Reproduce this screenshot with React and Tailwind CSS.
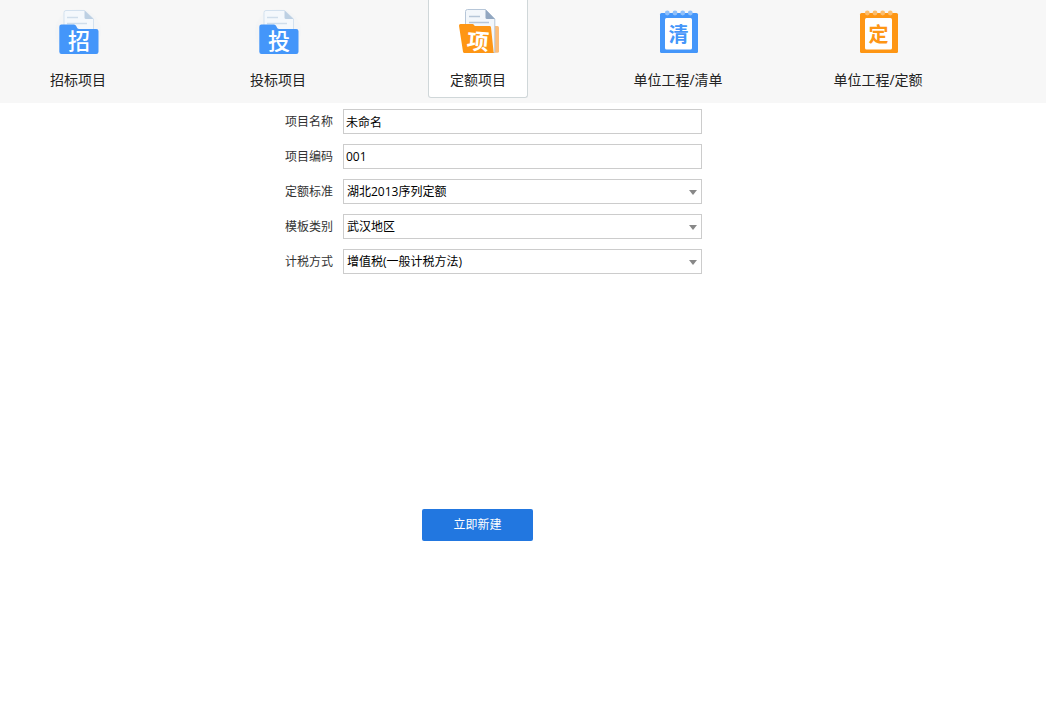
import { useState } from 'react';

const glyphFont = '"Noto Sans CJK SC", sans-serif';

function FolderIcon({ glyph }) {
  return (
    <svg viewBox="0 0 48 48" className="size-12" aria-hidden="true">
      <circle cx="24" cy="24" r="23" fill="#f4f5f6" />
      <path d="M12 2.5h18.5l9 8.5v12H10V4.5a2 2 0 0 1 2-2z" fill="#f4f8fc" stroke="#d3e1ef" />
      <path d="M30.5 2.5l9 8.5H32a1.5 1.5 0 0 1-1.5-1.5z" fill="#bdd0e3" />
      <path d="M13 9.5h11M13 15.5h20" stroke="#cfddeb" strokeWidth="1.5" />
      <path
        d="M7.5 16.5H20q1.5 0 2.2 1.5l1 2q.6 1 2 1h17.1a2.200 2.200 0 0 1 2.200 2.200v20.600a2.200 2.200 0 0 1-2.200 2.200H7.5a2.200 2.200 0 0 1-2.200-2.200V18.700a2.200 2.200 0 0 1 2.200-2.200z"
        fill="#4496fa"
      />
      <text x="25" y="41" textAnchor="middle" fontSize="22" fontWeight="500" fontFamily={glyphFont} fill="#fff">
        {glyph}
      </text>
    </svg>
  );
}

function OpenFolderIcon({ glyph }) {
  return (
    <svg viewBox="0 0 48 48" className="size-12" aria-hidden="true">
      <path d="M38 18h5.5a1.5 1.5 0 0 1 1.5 1.5v23.7a1.5 1.5 0 0 1-1.5 1.5H38z" fill="#fdbd78" />
      <path d="M13.5 1.5h18l9.3 9.5v33.5H11.500v-41a2 2 0 0 1 2-2z" fill="#f3f7fb" stroke="#b6c6d8" />
      <path d="M31.5 1.5l9.3 9.5H33a1.5 1.5 0 0 1-1.5-1.5z" fill="#92a7c1" />
      <path d="M15 8.5h11M15 14.5h20" stroke="#b6c6d8" strokeWidth="1.5" />
      <path
        d="M6.5 16h12q1 0 1.5.9l.8 1.1H35.5q1.300 0 1.500 1.300L39.700 45H10.500q-1.300 0-1.500-1.300L5 17.700Q4.900 16 6.500 16z"
        fill="#fe9614"
      />
      <text
        x="24"
        y="41.5"
        textAnchor="middle"
        fontSize="22"
        fontWeight="700"
        fontFamily={glyphFont}
        fill="#fff"
        transform="rotate(5 24 33)"
      >
        {glyph}
      </text>
    </svg>
  );
}

function NotepadIcon({ glyph, color, ring }) {
  return (
    <svg viewBox="0 0 48 48" className="size-12" aria-hidden="true">
      <rect x="6" y="5" width="38" height="40" rx="1.5" fill={color} />
      <rect x="11" y="10" width="27" height="31.5" rx="1.5" fill="#fff" />
      {[13.3, 21, 28.7, 36.3].map((x) => (
        <circle key={x} cx={x} cy="5" r="2.4" fill={ring} />
      ))}
      <text x="24.5" y="33.5" textAnchor="middle" fontSize="20" fontWeight="700" fontFamily={glyphFont} fill={color}>
        {glyph}
      </text>
    </svg>
  );
}

const tabs = [
  { id: 'tender', label: '招标项目', icon: <FolderIcon glyph="招" /> },
  { id: 'bid', label: '投标项目', icon: <FolderIcon glyph="投" /> },
  { id: 'quota', label: '定额项目', icon: <OpenFolderIcon glyph="项" /> },
  { id: 'unit-list', label: '单位工程/清单', icon: <NotepadIcon glyph="清" color="#4496fa" ring="#8fc0fb" /> },
  { id: 'unit-quota', label: '单位工程/定额', icon: <NotepadIcon glyph="定" color="#fe9614" ring="#fcbd6c" /> },
];

const fields = [
  { id: 'name', label: '项目名称', value: '未命名' },
  { id: 'code', label: '项目编码', value: '001' },
  { id: 'standard', label: '定额标准', options: ['湖北2013序列定额'] },
  { id: 'template', label: '模板类别', options: ['武汉地区'] },
  { id: 'tax', label: '计税方式', options: ['增值税(一般计税方法)'] },
];

const control = 'h-[25px] w-full border border-[#cccccc] bg-white text-xs text-black outline-none focus:border-[#2277e0]';

function Field({ field }) {
  return (
    <div className="flex items-center gap-[10px]">
      <label htmlFor={field.id} className="w-20 shrink-0 text-right text-xs text-[#333333]">
        {field.label}
      </label>
      <div className="relative min-w-0 flex-1">
        {field.options ? (
          <>
            <select id={field.id} className={`${control} block appearance-none pr-6 pl-[3px]`}>
              {field.options.map((o) => (
                <option key={o}>{o}</option>
              ))}
            </select>
            <svg
              viewBox="0 0 8 5"
              className="pointer-events-none absolute top-[11px] right-[5px] h-[5px] w-2"
              aria-hidden="true"
            >
              <path d="M0 0h8L4 5z" fill="#888" />
            </svg>
          </>
        ) : (
          <input id={field.id} type="text" defaultValue={field.value} className={`${control} block px-[2px]`} />
        )}
      </div>
    </div>
  );
}

export default function App() {
  const [active, setActive] = useState('quota');

  return (
    <div className="min-h-screen bg-white font-['Open_Sans','Noto_Sans_CJK_SC',sans-serif]">
      <nav className="flex gap-[100px] bg-[#f7f7f7] px-7 pb-[5px]">
        {tabs.map((tab) => (
          <button
            key={tab.id}
            type="button"
            onClick={() => setActive(tab.id)}
            className={`flex w-[100px] shrink-0 flex-col items-center gap-[14px] rounded-b-[3px] border border-t-0 pt-2 pb-[7px] text-sm leading-5 whitespace-nowrap text-[#222222] ${
              active === tab.id ? 'border-[#d0d7d9] bg-white' : 'border-transparent'
            }`}
          >
            {tab.icon}
            {tab.label}
          </button>
        ))}
      </nav>

      <main className="max-w-[955px] pt-[6px]">
        <form className="flex flex-col items-center" onSubmit={(e) => e.preventDefault()}>
          <div className="flex w-full max-w-[449px] flex-col gap-[10px]">
            {fields.map((field) => (
              <Field key={field.id} field={field} />
            ))}
          </div>
          <button
            type="submit"
            className="mt-[235px] h-8 w-[111px] rounded-[2px] bg-[#2277e0] text-xs text-white hover:bg-[#1c6acb]"
          >
            立即新建
          </button>
        </form>
      </main>
    </div>
  );
}
